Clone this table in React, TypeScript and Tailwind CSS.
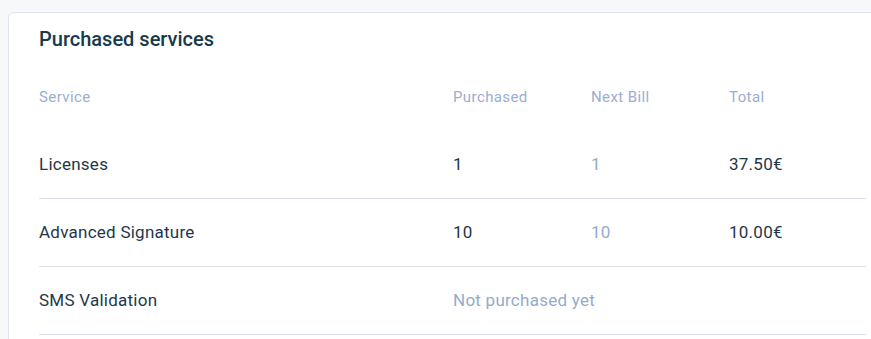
import React from "react";

type Row = {
  service: string;
  purchased?: string;
  nextBill?: string;
  total?: string;
};

const rows: Row[] = [
  { service: "Licenses", purchased: "1", nextBill: "1", total: "37.50€" },
  { service: "Advanced Signature", purchased: "10", nextBill: "10", total: "10.00€" },
  { service: "SMS Validation" },
];

export default function App() {
  return (
    <div
      className="w-[871px] h-[339px] overflow-hidden bg-[#f7f8f9] pt-3 pl-2"
      style={{ fontFamily: "Roboto, 'Liberation Sans', sans-serif" }}
    >
      <div className="w-[890px] h-[360px] bg-white border border-[#dde2f0] rounded-md pl-[30px] pr-[30px] pt-[14px]">
        <h2 className="text-[20px] leading-6 font-medium text-[#17394b]">Purchased services</h2>

        <div className="mt-3 w-[827px]">
          {/* header */}
          <div className="grid grid-cols-[414px_138px_138px_1fr] items-center h-[68px] text-[15px] tracking-[0.4px] text-[#9aaecf]">
            <div>Service</div>
            <div>Purchased</div>
            <div>Next Bill</div>
            <div>Total</div>
          </div>

          {rows.map((r) => (
            <div
              key={r.service}
              className="grid grid-cols-[414px_138px_138px_1fr] items-center h-[68px] border-b border-[#dde2ee] text-[17px] tracking-[0.25px] text-[#1f374a]"
            >
              <div>{r.service}</div>
              {r.purchased ? (
                <>
                  <div>{r.purchased}</div>
                  <div className="text-[#94abcc]">{r.nextBill}</div>
                  <div>{r.total}</div>
                </>
              ) : (
                <div className="col-span-3 text-[#94abcc]">Not purchased yet</div>
              )}
            </div>
          ))}
        </div>
      </div>
    </div>
  );
}
